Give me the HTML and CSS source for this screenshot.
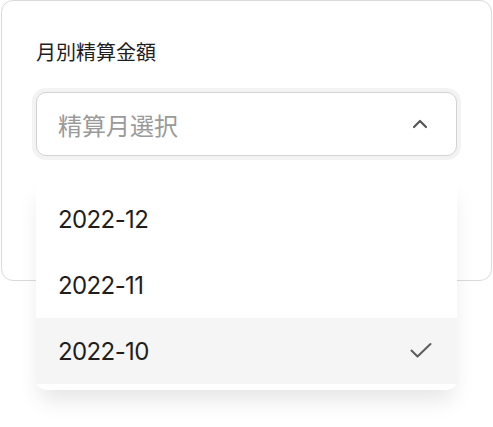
FILE: index.html
```html
<!DOCTYPE html>
<html>
<head>
  <meta charset="utf-8">
  <title>月別精算金額</title>
  <link rel="stylesheet" href="styles.css">
</head>
<body>
  <div class="page">
    <div class="card">
      <!-- Label -->
      <h2 class="field-label">月別精算金額</h2>

      <!-- Select + open menu -->
      <div class="select-wrap">
        <div class="select">
          <span class="placeholder">精算月選択</span>
          <svg class="chevron" width="16" height="10" viewBox="0 0 16 10">
            <path d="M2 8 L8 2 L14 8" fill="none" stroke="#555" stroke-width="2.2" stroke-linecap="round" stroke-linejoin="round"/>
          </svg>
        </div>
        <ul class="menu">
          <li class="menu-item">2022-12</li>
          <li class="menu-item">2022-11</li>
          <li class="menu-item selected">
            2022-10
            <svg class="check" width="24" height="18" viewBox="0 0 24 18">
              <path d="M2.5 8.5 L8.5 14.5 L21.5 2" fill="none" stroke="#5c5c5c" stroke-width="2" stroke-linecap="round" stroke-linejoin="round"/>
            </svg>
          </li>
        </ul>
      </div>
    </div>
  </div>
</body>
</html>
```

FILE: styles.css
```css
/* page */
html, body {
  margin: 0;
  height: 100%;
}
body {
  background-color: #fff;
  font-family: 'Inter', 'Noto Sans CJK JP', sans-serif;
  color: #222;
}
.page {
  min-height: 427px;
}
/* white card with thin grey border */
.card {
  box-sizing: border-box;
  margin: 0 1px;
  height: 281px;
  border: 1px solid #dadada;
  border-radius: 12px;
  padding: 37px 34px 0 34px;
}
.field-label {
  margin: 0;
  font-family: 'Noto Sans CJK JP', sans-serif;
  font-size: 20px;
  font-weight: 400;
  line-height: 28px;
  color: #1e1e1e;
}
.select-wrap {
  position: relative;
  margin-top: 26px;
}
.select {
  box-sizing: border-box;
  height: 64px;
  display: flex;
  align-items: center;
  justify-content: space-between;
  padding: 0 28px 0 21px;
  border: 1px solid #d2d2d2;
  border-radius: 10px;
  box-shadow: 0 0 0 4px #f3f3f3;
  background-color: #fff;
}
.placeholder {
  font-family: 'Noto Sans CJK JP', sans-serif;
  font-size: 24px;
  color: #9a9a9a;
}
/* open dropdown list */
.menu {
  position: absolute;
  z-index: 2;
  top: calc(100% + 24px);
  left: 0;
  right: 0;
  margin: 0;
  padding: 6px 0;
  list-style: none;
  background-color: #fff;
  border-radius: 0 0 10px 10px;
  box-shadow: 0 14px 22px -4px rgba(0, 0, 0, 0.1);
}
.menu-item {
  height: 66px;
  display: flex;
  align-items: center;
  justify-content: space-between;
  padding: 0 24px 0 22px;
  font-size: 24px;
  letter-spacing: -0.6px;
  color: #1e1e1e;
}
.menu-item.selected {
  background-color: #f5f5f5;
}
```
